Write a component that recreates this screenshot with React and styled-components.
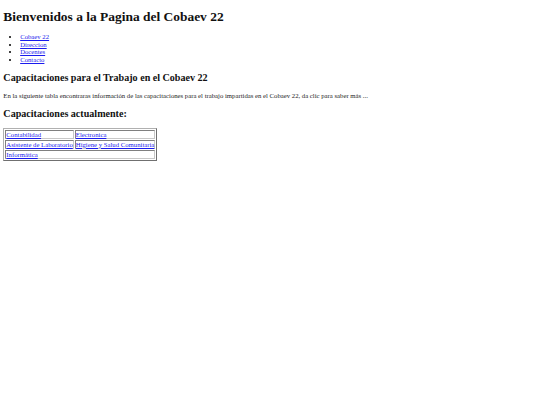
import React from "react";
import styled, { createGlobalStyle } from "styled-components";

const GlobalStyle = createGlobalStyle`
  body {
    margin: 0;
    font-family: "Liberation Serif", "Times New Roman", serif;
    font-size: 6.72px;
    color: #000;
    background: #fff;
  }
`;

const Page = styled.div`
  padding: 0 3.36px;
`;

const Title = styled.h1`
  font-size: 13.44px;
  line-height: 15px;
  font-weight: 700;
  margin: 9px 0 9px;
  color: #111;
`;

const NavList = styled.ul`
  margin: 0;
  padding-left: 16.8px;
  list-style: disc;
`;

const NavItem = styled.li`
  line-height: 7.6px;
`;

const Anchor = styled.a`
  color: #1a1aee;
  text-decoration: underline;
`;

const Subtitle = styled.h2`
  font-size: 10.08px;
  line-height: 11.6px;
  font-weight: 700;
  margin: 8.4px 0;
  color: #111;
`;

const Text = styled.p`
  margin: 6.72px 0;
  line-height: 7.7px;
  color: #222;
`;

const Table = styled.table`
  border: 1px solid;
  border-color: #b0b0b0 #707070 #707070 #b0b0b0;
  border-collapse: separate;
  border-spacing: 1px;
  font-size: 6.72px;
`;

const Cell = styled.td`
  border: 1px solid;
  border-color: #808080 #c8c8c8 #c8c8c8 #808080;
  padding: 0;
  line-height: 7px;
  white-space: nowrap;
`;

const links = ["Cobaev 22", "Direccion", "Docentes", "Contacto"];

const rows = [
  ["Contabilidad", "Electronica"],
  ["Asistente de Laboratorio", "Higiene y Salud Comunitaria"],
  ["Informática"],
];

const App = () => {
  return (
    <Page>
      <GlobalStyle />
      <Title>Bienvenidos a la Pagina del Cobaev 22</Title>
      <NavList>
        {links.map((l) => (
          <NavItem key={l}>
            <Anchor href="#">{l}</Anchor>
          </NavItem>
        ))}
      </NavList>
      <Subtitle>Capacitaciones para el Trabajo en el Cobaev 22</Subtitle>
      <Text>
        En la siguiente tabla encontraras información de las capacitaciones
        para el trabajo impartidas en el Cobaev 22, da clic para saber más ...
      </Text>
      <Subtitle>Capacitaciones actualmente:</Subtitle>
      <Table>
        <tbody>
          {rows.map((r, i) => (
            <tr key={i}>
              {r.map((c) => (
                <Cell key={c} colSpan={r.length === 1 ? 2 : 1}>
                  <Anchor href="#">{c}</Anchor>
                </Cell>
              ))}
            </tr>
          ))}
        </tbody>
      </Table>
    </Page>
  );
};

export default App;
